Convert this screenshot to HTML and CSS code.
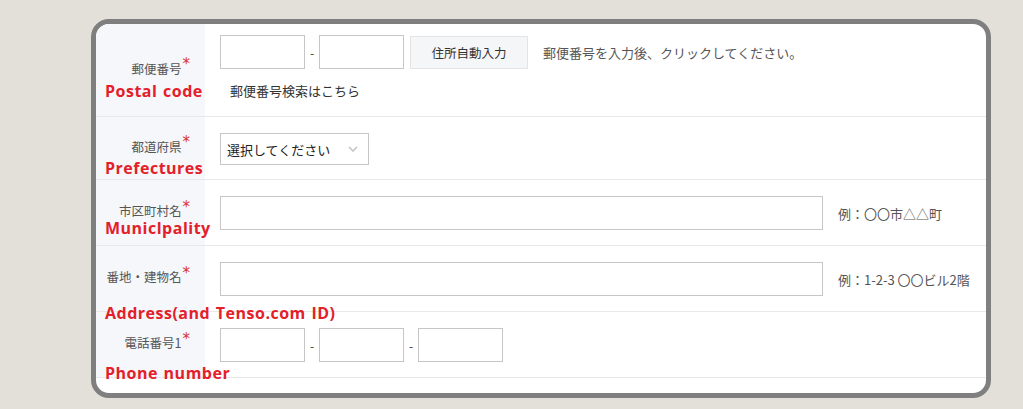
FILE: index.html
```html
<!DOCTYPE html>
<html lang="ja">
<head>
    <meta charset="UTF-8">
    <meta name="viewport" content="width=device-width, initial-scale=1.0">
    <title>お届け先住所</title>
    <link rel="stylesheet" href="styles.css">
</head>
<body>
    <section class="frame">
        <div class="row row-postal">
            <div class="label">郵便番号<span class="req">*</span></div>
            <div class="field">
                <div class="line">
                    <input class="box short" type="text">
                    <span class="dash">-</span>
                    <input class="box short" type="text">
                    <button class="auto" type="button">住所自動入力</button>
                    <span class="hint">郵便番号を入力後、クリックしてください。</span>
                </div>
                <div class="search">郵便番号検索はこちら</div>
            </div>
            <span class="note note-postal">Postal code</span>
        </div>

        <div class="row row-pref">
            <div class="label">都道府県<span class="req">*</span></div>
            <div class="field">
                <div class="select">
                    <span>選択してください</span>
                    <svg width="10" height="6" viewBox="0 0 10 6"><path d="M1 1l4 4 4-4" fill="none" stroke="#c4c4c4" stroke-width="1.6"/></svg>
                </div>
            </div>
            <span class="note note-pref">Prefectures</span>
        </div>

        <div class="row">
            <div class="label">市区町村名<span class="req">*</span></div>
            <div class="field">
                <div class="line">
                    <input class="box wide" type="text">
                    <span class="hint">例：〇〇市△△町</span>
                </div>
            </div>
            <span class="note note-city">Municlpality</span>
        </div>

        <div class="row">
            <div class="label">番地・建物名<span class="req">*</span></div>
            <div class="field">
                <div class="line">
                    <input class="box wide" type="text">
                    <span class="hint">例：1-2-3 〇〇ビル2階</span>
                </div>
            </div>
            <span class="note note-addr">Address(and Tenso.com ID)</span>
        </div>

        <div class="row">
            <div class="label">電話番号1<span class="req">*</span></div>
            <div class="field">
                <div class="line">
                    <input class="box short" type="text">
                    <span class="dash">-</span>
                    <input class="box short" type="text">
                    <span class="dash">-</span>
                    <input class="box short" type="text">
                </div>
            </div>
            <span class="note note-tel">Phone number</span>
        </div>
    </section>
</body>
</html>
```

FILE: styles.css
```css
* {
    margin: 0;
    padding: 0;
    box-sizing: border-box;
}

body {
    background: #e3e0da;
    font-family: "Noto Sans CJK JP", sans-serif;
    font-size: 13px;
    color: #333;
    padding: 19px 0 0 91px;
}

.frame {
    width: 900px;
    height: 379px;
    background: #fff;
    border: 5px solid #7f7f7f;
    border-radius: 18px;
    overflow: hidden;
}

.row {
    position: relative;
    display: grid;
    grid-template-columns: 109px 1fr;
    border-bottom: 1px solid #e8e8e8;
}

.label {
    display: flex;
    align-items: center;
    justify-content: flex-end;
    padding: 0 15px 3px 0;
    background: #f5f7fa;
    color: #555;
    font-size: 12.5px;
    line-height: 18px;
    white-space: nowrap;
}

.req {
    color: #d9302f;
    font-family: "DejaVu Sans", sans-serif;
    font-size: 15px;
    line-height: 1;
    position: relative;
    top: -4px;
    margin-left: 1px;
}

.field {
    padding: 16px 0 15px 15px;
}
.row-postal .field {
    padding: 11px 0 15px 15px;
}
.row-pref .field {
    padding: 16px 0 14px 15px;
}

.line {
    display: flex;
    align-items: center;
}

.box {
    height: 34px;
    border: 1px solid #c6c6c6;
    background: #fff;
    outline: none;
}
.box.short {
    width: 85px;
}
.box.wide {
    width: 603px;
}

.dash {
    width: 14px;
    text-align: center;
    font-size: 12px;
    color: #333;
}

.auto {
    margin-left: 6px;
    width: 118px;
    height: 33px;
    background: #f5f6f8;
    border: 1px solid #e4e4e4;
    font-family: "Noto Sans CJK JP", sans-serif;
    font-size: 12.5px;
    color: #333;
}

.hint {
    margin-left: 15px;
    color: #555;
    white-space: nowrap;
}

.search {
    margin-top: 12px;
    padding-left: 10px;
    line-height: 20px;
}

.select {
    display: flex;
    align-items: center;
    justify-content: space-between;
    width: 149px;
    height: 32px;
    padding: 0 10px 0 6px;
    border: 1px solid #c6c6c6;
    font-size: 13px;
    color: #222;
}

.note {
    position: absolute;
    z-index: 1;
    left: 9px;
    font-family: "Open Sans", sans-serif;
    font-weight: 700;
    font-size: 16px;
    line-height: 20px;
    letter-spacing: 0.5px;
    word-spacing: 1px;
    color: #e3202a;
    white-space: nowrap;
}
.note-postal { top: 57px; }
.note-pref { top: 41px; }
.note-city { top: 38px; }
.note-addr { top: 57px; }
.note-tel { top: 51px; }
```
